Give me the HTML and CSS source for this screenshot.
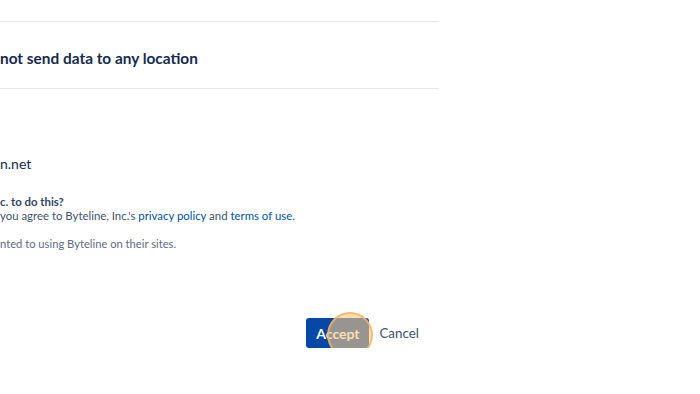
FILE: index.html
```html
<!DOCTYPE html>
<html lang="en">
<head>
    <title>Byteline permissions</title>
    <link rel="stylesheet" href="styles.css">
</head>
<body>
    <div class="panel">
        <div class="perm-row">
            <span class="perm-title">not send data to any location</span>
        </div>
        <div class="site">n.net</div>
        <div class="question">
            <div class="q-title">c. to do this?</div>
            <div class="q-text">you agree to Byteline, Inc.'s <a href="#">privacy policy</a> and <a href="#">terms of use</a>.</div>
        </div>
        <div class="note">nted to using Byteline on their sites.</div>
        <div class="actions">
            <button class="btn-accept">Accept</button>
            <button class="btn-cancel">Cancel</button>
            <span class="click-dot"></span>
        </div>
    </div>
</body>
</html>
```

FILE: styles.css
```css
body {
    margin: 0;
    padding: 0;
    background-color: #fff;
    font-family: "Lato", "Noto Sans", sans-serif;
    color: #172b4d;
}
.panel {
    width: 439px;
    padding-top: 21px;
}
.perm-row {
    height: 60px;
    padding-top: 6px;
    border-top: 1px solid #e6e8eb;
    border-bottom: 1px solid #e6e8eb;
    display: flex;
    align-items: center;
}
.perm-title {
    font-size: 15.4px;
    font-weight: 700;
    color: #172b4d;
}
.site {
    margin-top: 65px;
    font-size: 14px;
    line-height: 20px;
}
.question {
    margin-top: 21px;
    font-size: 11.4px;
    line-height: 14px;
    color: #42526e;
}
.q-title {
    font-weight: 700;
    color: #344563;
}
.q-text a {
    color: #0052a3;
    text-decoration: none;
}
.note {
    margin-top: 14px;
    font-size: 11.2px;
    line-height: 14px;
    color: #5e6c84;
}
.actions {
    position: relative;
    margin-top: 67px;
    padding-right: 20px;
    display: flex;
    justify-content: flex-end;
    align-items: center;
    gap: 10px;
}
.btn-accept {
    width: 63px;
    height: 30px;
    border: none;
    border-radius: 3px;
    background-color: #0747a6;
    color: #fff;
    font-family: inherit;
    font-size: 14px;
    font-weight: 700;
    padding: 0;
}
.btn-cancel {
    border: none;
    background: none;
    color: #42526e;
    font-family: inherit;
    font-size: 13.4px;
    padding: 0;
}
.click-dot {
    position: absolute;
    left: 327px;
    top: -6px;
    width: 42px;
    height: 42px;
    border-radius: 50%;
    border: 2px solid rgba(246, 178, 96, 0.8);
    background-color: rgba(250, 200, 130, 0.6);
}
```
